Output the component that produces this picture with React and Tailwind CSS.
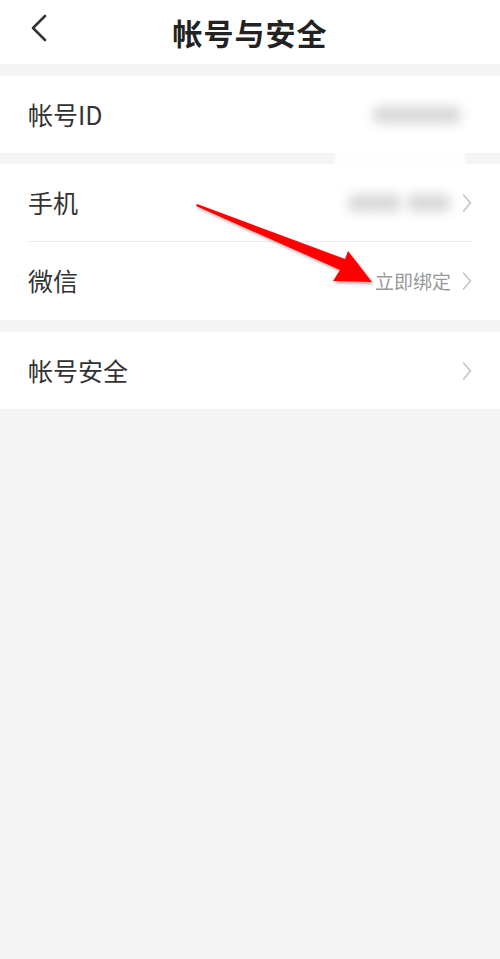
const font = { fontFamily: '"Noto Sans CJK SC", "Noto Sans", sans-serif' }

function Chevron() {
  return (
    <svg className="ml-[11px]" width="10" height="20" viewBox="0 0 10 20" fill="none">
      <path d="M1.5 2 L8.5 10 L1.5 18" stroke="#c4c4c4" strokeWidth="1.6" strokeLinecap="round" strokeLinejoin="round" />
    </svg>
  )
}

function Row({ label, right, chevron = true, border = false, h = 'h-[77px]' }) {
  return (
    <div className={`relative flex items-center ${h} pl-7 pr-7`}>
      <span className="text-[25px] text-[#333]">{label}</span>
      <div className="ml-auto flex items-center">
        {right}
        {chevron && <Chevron />}
      </div>
      {border && <div className="absolute left-7 right-7 bottom-0 h-px bg-[#eeeeee]" />}
    </div>
  )
}

function Blur({ w }) {
  return <div className={`h-[18px] ${w} rounded-full bg-[#d8d8d8] blur-[6px]`} />
}

export default function App() {
  return (
    <div className="relative w-[500px] h-[959px] bg-[#f4f4f4] overflow-hidden" style={font}>
      <header className="relative h-[64px] bg-white flex items-center justify-center">
        <svg className="absolute left-[28px] top-[14px]" width="22" height="28" viewBox="0 0 22 28" fill="none">
          <path d="M17 2 L5 14 L17 26" stroke="#333" strokeWidth="2.6" strokeLinecap="round" strokeLinejoin="round" />
        </svg>
        <h1 className="text-[30px] font-bold text-[#222] tracking-[1px]">帐号与安全</h1>
      </header>

      <div className="mt-3 bg-white">
        <Row label="帐号ID" chevron={false} right={<div className="mr-[10px]"><Blur w="w-[90px]" /></div>} />
      </div>

      <div className="mt-[11px] bg-white">
        <Row label="手机" h="h-[78px]" border right={<div className="flex gap-1"><Blur w="w-[55px]" /><Blur w="w-[45px]" /></div>} />
        <Row label="微信" h="h-[78px]" right={<span className="text-[19px] text-[#999]">立即绑定</span>} />
      </div>

      <div className="mt-3 bg-white">
        <Row label="帐号安全" right={null} />
      </div>

      <div className="absolute left-[335px] top-[150px] w-[130px] h-[20px] bg-white/90 blur-[1px]" />

      <svg className="absolute left-0 top-0 pointer-events-none" width="500" height="400" viewBox="0 0 500 400">
        <defs>
          <filter id="sh" x="-10%" y="-10%" width="120%" height="120%">
            <feDropShadow dx="1.5" dy="2" stdDeviation="1.5" floodColor="#000" floodOpacity="0.35" />
          </filter>
        </defs>
        <path d="M197 204 L345 259 L348 251 L372 282 L333 281 L340 270 L196 206 Z" fill="#ff0000" filter="url(#sh)" />
      </svg>
    </div>
  )
}
